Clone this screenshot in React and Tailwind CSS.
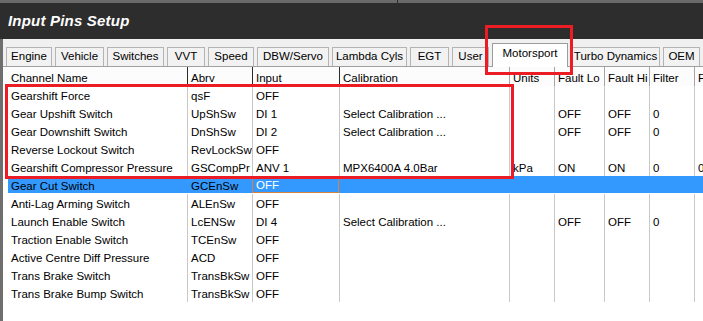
import clsx from 'clsx';

const TABS = [
  { label: 'Engine', w: 'w-[46px]' },
  { label: 'Vehicle', w: 'w-[49px]' },
  { label: 'Switches', w: 'w-[57px]' },
  { label: 'VVT', w: 'w-[38px]' },
  { label: 'Speed', w: 'w-[46px]' },
  { label: 'DBW/Servo', w: 'w-[72px]' },
  { label: 'Lambda Cyls', w: 'w-[75px]' },
  { label: 'EGT', w: 'w-[39px]' },
  { label: 'User', w: 'w-[37px]' },
  { label: 'Motorsport', w: 'w-[76px]', active: true },
  { label: 'Turbo Dynamics', w: 'w-[89px]' },
  { label: 'OEM', w: 'w-[37px]' },
  { label: 'Other', w: 'w-[45px]' },
];

// column widths measured off the grid lines
const COLS = [
  { key: 'name', label: 'Channel Name', w: 'w-[179px]' },
  { key: 'abrv', label: 'Abrv', w: 'w-[65px]', dark: true },
  { key: 'input', label: 'Input', w: 'w-[87px]', dark: true },
  { key: 'cal', label: 'Calibration', w: 'w-[170px]', dark: true },
  { key: 'units', label: 'Units', w: 'w-[45px]' },
  { key: 'lo', label: 'Fault Lo', w: 'w-[50px]' },
  { key: 'hi', label: 'Fault Hi', w: 'w-[45px]' },
  { key: 'filter', label: 'Filter', w: 'w-[45px]' },
  { key: 'f', label: 'Filter 2', w: 'w-[60px]' },
];

const ROWS = [
  { name: 'Gearshift Force', abrv: 'qsF', input: 'OFF' },
  { name: 'Gear Upshift Switch', abrv: 'UpShSw', input: 'DI 1', cal: 'Select Calibration ...', lo: 'OFF', hi: 'OFF', filter: '0' },
  { name: 'Gear Downshift Switch', abrv: 'DnShSw', input: 'DI 2', cal: 'Select Calibration ...', lo: 'OFF', hi: 'OFF', filter: '0' },
  { name: 'Reverse Lockout Switch', abrv: 'RevLockSw', input: 'OFF' },
  { name: 'Gearshift Compressor Pressure', abrv: 'GSCompPr', input: 'ANV 1', cal: 'MPX6400A 4.0Bar', units: 'kPa', lo: 'ON', hi: 'ON', filter: '0', f: '0' },
  { name: 'Gear Cut Switch', abrv: 'GCEnSw', input: 'OFF', selected: true },
  { name: 'Anti-Lag Arming Switch', abrv: 'ALEnSw', input: 'OFF' },
  { name: 'Launch Enable Switch', abrv: 'LcENSw', input: 'DI 4', cal: 'Select Calibration ...', lo: 'OFF', hi: 'OFF', filter: '0' },
  { name: 'Traction Enable Switch', abrv: 'TCEnSw', input: 'OFF' },
  { name: 'Active Centre Diff Pressure', abrv: 'ACD', input: 'OFF' },
  { name: 'Trans Brake Switch', abrv: 'TransBkSw', input: 'OFF' },
  { name: 'Trans Brake Bump Switch', abrv: 'TransBkSw', input: 'OFF' },
];

function TitleBar() {
  return (
    <div className="relative h-[39px] border-t-[3px] border-[#6a6a6a] bg-[#2d2d2d] flex items-center pl-[8px] pb-[1px]">
      <span className="text-white font-bold italic text-[15px] tracking-[0.2px]">Input Pins Setup</span>
      <div className="absolute left-[397px] -top-[3px] w-px h-[3px] bg-[#2d2d2d]" />
    </div>
  );
}

function TabStrip() {
  return (
    <div className="h-[27px] flex items-end gap-[3px] pl-[3px]">
      {TABS.map((t) => (
        <div
          key={t.label}
          className={clsx(
            t.w,
            'shrink-0 flex items-center justify-center whitespace-nowrap border border-b-0',
            t.active
              ? 'relative top-px z-10 h-[24px] bg-white border-[#9c9c9c] pb-[4px]'
              : 'h-[19px] bg-[#f2f2f2] border-[#b4b4b4] pb-[1px]'
          )}
        >
          {t.label}
        </div>
      ))}
    </div>
  );
}

function HeaderRow() {
  return (
    <div className="flex h-[20px] bg-[#fcfcfc] border-t border-[#a0a0a0]">
      <div className="w-[5px] shrink-0" />
      {COLS.map((c, i) => (
        <div
          key={c.key}
          className={clsx(
            c.w,
            'shrink-0 overflow-hidden whitespace-nowrap flex items-center pl-[3px] pt-[4px]',
            i > 0 && 'border-l',
            c.dark ? 'border-[#2a2a2a]' : 'border-[#a6a6a6]'
          )}
        >
          {c.label}
        </div>
      ))}
    </div>
  );
}

function Row({ r }) {
  return (
    <div className="flex h-[18px]">
      <div className="w-[5px] shrink-0" />
      <div className={clsx('flex flex-1', r.selected ? 'h-[17px] bg-[#3399ff]' : 'h-full')}>
        {COLS.map((c, i) => {
          const focus = r.selected && c.key === 'input';
          return (
            <div
              key={c.key}
              className={clsx(
                c.w,
                'shrink-0 overflow-hidden whitespace-nowrap flex items-center pl-[3px]',
                focus
                  ? 'border border-[#d9823b] text-white pt-[3px]'
                  : clsx('pt-[4px]', i > 0 && 'border-l', r.selected ? 'border-transparent' : 'border-[#c8c8c8]')
              )}
            >
              {r[c.key] || ''}
            </div>
          );
        })}
      </div>
    </div>
  );
}

export default function App() {
  return (
    <div className="relative w-[703px] h-[321px] overflow-hidden bg-[#f0f0f0] font-['Liberation_Sans',Arial,sans-serif] text-[11.5px] leading-none text-black">
      <TitleBar />
      <div className="flex flex-col h-[282px] border-l-[3px] border-[#6e6e6e]">
        <TabStrip />
        <div className="flex-1 flex flex-col bg-white">
          <HeaderRow />
          {ROWS.map((r) => (
            <Row key={r.name + r.abrv} r={r} />
          ))}
        </div>
      </div>

      {/* red callouts drawn over the screenshot */}
      <div className="absolute left-[485px] top-[25px] w-[88px] h-[50px] border-[3px] border-[#ec1c24]" />
      <div className="absolute left-[5px] top-[84px] w-[509px] h-[95px] border-[3px] border-[#ec1c24]" />
    </div>
  );
}
